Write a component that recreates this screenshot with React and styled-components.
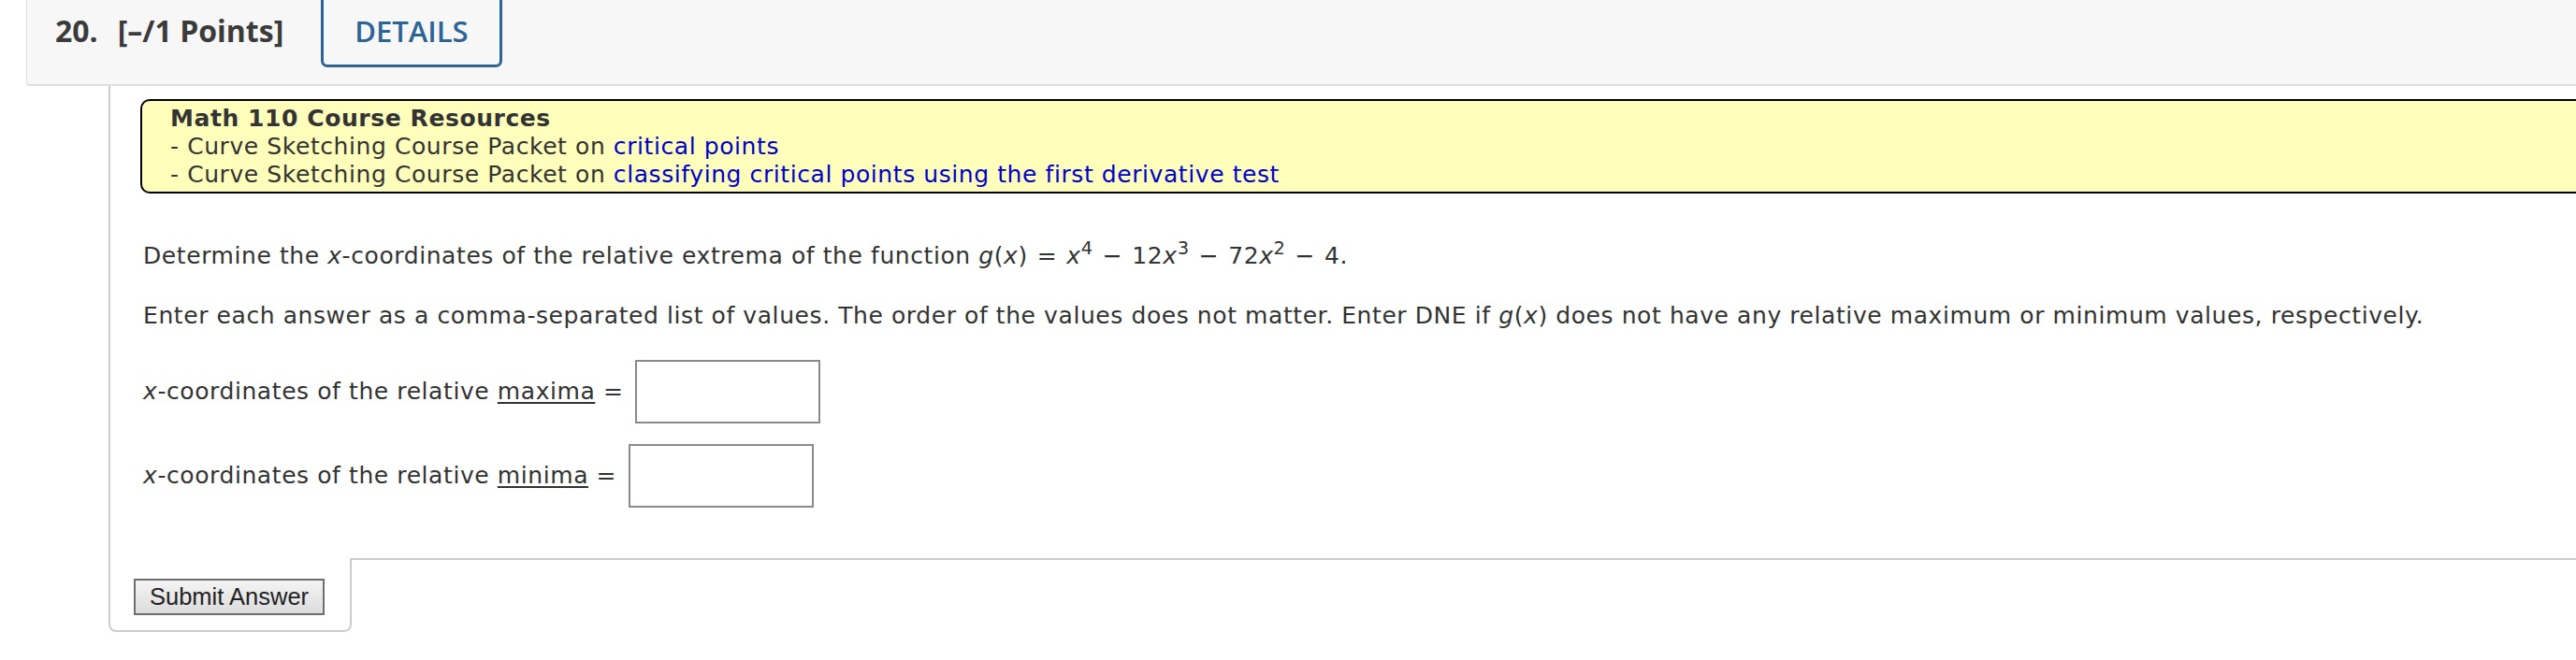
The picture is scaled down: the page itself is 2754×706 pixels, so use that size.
import styled, { createGlobalStyle } from "styled-components"

const GlobalStyle = createGlobalStyle`
    html, body {
        margin: 0;
        padding: 0;
        background: #fff;
        overflow: hidden;
    }
`

const App = () => {
    return (
        <Page>
            <GlobalStyle />
            <Header>
                <QuestionNumber>20.</QuestionNumber>
                <Points>[–/1 Points]</Points>
                <DetailsButton>DETAILS</DetailsButton>
            </Header>
            <Question>
                <Resources>
                    <ResourceTitle>Math 110 Course Resources</ResourceTitle>
                    <div>- Curve Sketching Course Packet on <Link href="#">critical points</Link></div>
                    <div>- Curve Sketching Course Packet on <Link href="#">classifying critical points using the first derivative test</Link></div>
                </Resources>

                <Prompt>
                    Determine the <Var>x</Var>-coordinates of the relative extrema of the function <Var>g</Var>(<Var>x</Var>)<Op>=</Op><Var>x</Var><Sup>4</Sup><Op>−</Op>12<Var>x</Var><Sup>3</Sup><Op>−</Op>72<Var>x</Var><Sup>2</Sup><Op>−</Op>4.
                </Prompt>
                <Prompt $gap={34}>
                    Enter each answer as a comma-separated list of values. The order of the values does not matter. Enter DNE if <Var>g</Var>(<Var>x</Var>) does not have any relative maximum or minimum values, respectively.
                </Prompt>

                <AnswerRow $gap={32}>
                    <span><Var>x</Var>-coordinates of the relative <Term>maxima</Term> =</span>
                    <AnswerInput type="text" />
                </AnswerRow>
                <AnswerRow $gap={22}>
                    <span><Var>x</Var>-coordinates of the relative <Term>minima</Term> =</span>
                    <AnswerInput type="text" />
                </AnswerRow>
            </Question>
            <SubmitTab>
                <SubmitButton type="button">Submit Answer</SubmitButton>
            </SubmitTab>
        </Page>
    )
}

const Page = styled.div`
    padding-left: 28px;
    margin-right: -60px;
    color: #333;
`

const Header = styled.div`
    display: flex;
    align-items: flex-start;
    height: 90px;
    padding-left: 30px;
    background: #f7f7f7;
    border-left: 1px solid #ddd;
    border-bottom: 2px solid #ddd;
    border-bottom-left-radius: 4px;
    font-family: "Open Sans", sans-serif;
`

const QuestionNumber = styled.span`
    font-size: 32px;
    font-weight: 700;
    line-height: 66px;
    color: #3b3b3b;
    margin-right: 21px;
`

const Points = styled(QuestionNumber)`
    margin-right: 40px;
`

const DetailsButton = styled.button`
    box-sizing: border-box;
    height: 72px;
    display: flex;
    align-items: center;
    padding: 0 33px 4px;
    background: transparent;
    border: 3px solid #2c6496;
    border-top: none;
    border-radius: 0 0 7px 7px;
    color: #2c6496;
    font-family: "Open Sans", sans-serif;
    font-size: 31px;
    font-weight: 600;
    cursor: pointer;
`

const Question = styled.div`
    margin-left: 88px;
    padding: 14px 0 54px 32px;
    border-left: 2px solid #ccc;
    border-bottom: 2px solid #ccc;
    font-family: "DejaVu Sans", Verdana, sans-serif;
    font-size: 25px;
    line-height: 30px;
    letter-spacing: 0.58px;
`

const Resources = styled.div`
    padding: 4px 0 3px 30px;
    background: #ffffbb;
    border: 2px solid #000;
    border-radius: 10px;
`

const ResourceTitle = styled.div`
    font-weight: 700;
`

const Link = styled.a`
    color: #0000cc;
    text-decoration: none;
`

const Prompt = styled.p`
    margin: ${p => p.$gap || 52}px 0 0;
    padding-left: 3px;
`

const Var = styled.i`
    font-style: italic;
`

const Op = styled.span`
    margin: 0 10px;
`

const Sup = styled.sup`
    font-size: 0.78em;
    line-height: 0;
    vertical-align: 0.5em;
`

const Term = styled.span`
    text-decoration: underline;
    text-underline-offset: 3px;
`

const AnswerRow = styled.div`
    display: flex;
    align-items: center;
    gap: 13px;
    margin-top: ${p => p.$gap}px;
    padding-left: 3px;
`

const AnswerInput = styled.input`
    box-sizing: border-box;
    width: 198px;
    height: 68px;
    margin: 0;
    border: 2px solid #8a8a8a;
    border-radius: 0;
    background: #fff;
`

const SubmitTab = styled.div`
    width: fit-content;
    margin-left: 88px;
    margin-top: -2px;
    padding: 22px 27px 16px 25px;
    background: #fff;
    border: 2px solid #ccc;
    border-top: none;
    border-radius: 0 0 8px 8px;
`

const SubmitButton = styled.button`
    box-sizing: border-box;
    display: block;
    height: 39px;
    padding: 0 15px;
    background: linear-gradient(#f4f4f4, #dcdcdc);
    border: 2px solid #6e6e6e;
    border-radius: 0;
    color: #222;
    font-family: "Liberation Sans", Arial, sans-serif;
    font-size: 25.5px;
    cursor: pointer;
`

export default App
